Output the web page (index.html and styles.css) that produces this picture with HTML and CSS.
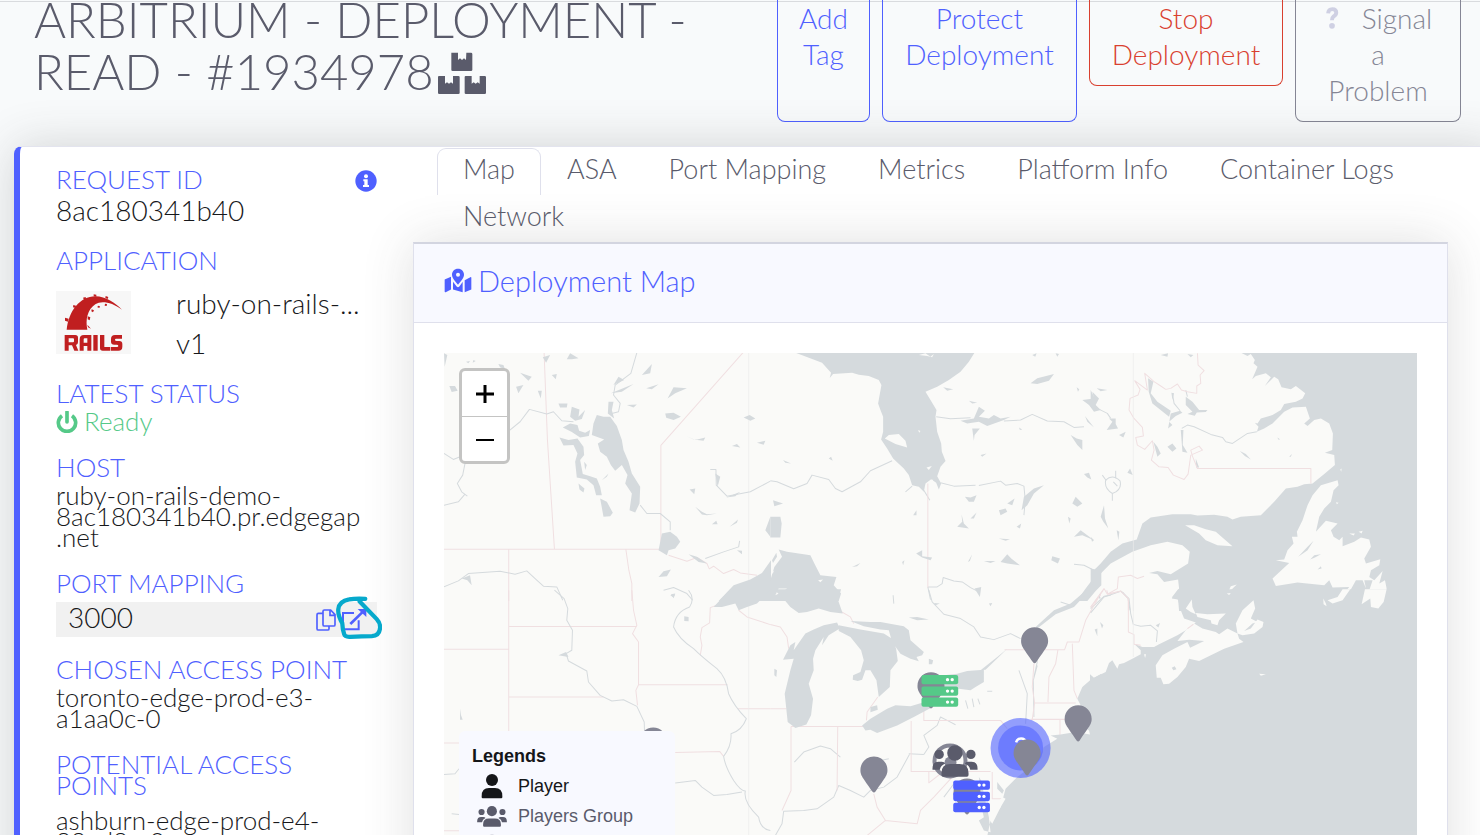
FILE: index.html
```html
<!DOCTYPE html>
<html lang="en">
<head>
<meta charset="utf-8">
<title>Arbitrium - Deployment</title>
<link rel="stylesheet" href="styles.css">
</head>
<body>
<header class="page-head">
  <h1 class="title">ARBITRIUM - DEPLOYMENT -<br>READ - #1934978<svg class="boxes" viewBox="0 0 144 126" aria-hidden="true"><g fill="currentColor"><path d="M40 2h20v22l6-5 6 5 6-5 6 5 1-22h14q4 0 4 4v48q0 3-4 3H44q-4 0-4-3zM0 75q0-3 3-3h18v23l6-4 6 4 6-4 6 4V72h16q4 0 4 3v48q0 3-4 3H4q-4 0-4-3zM80 75q0-3 3-3h18v23l6-4 6 4 6-4 6 4V72h15q4 0 4 3v48q0 3-4 3H84q-4 0-4-3z"/></g></svg>
  </h1>
  <div class="actions">
    <button class="btn primary" type="button">Add<br>Tag</button>
    <button class="btn primary" type="button">Protect<br>Deployment</button>
    <button class="btn danger" type="button">Stop<br>Deployment</button>
    <button class="btn muted" type="button"><span><span class="question"><svg viewBox="0 0 32 62" width="16" height="22" aria-hidden="true"><path d="M5 18Q6 6 17 6q11 0 11 10 0 6-8 11-4 3-4 10" fill="none" stroke="#cfd0e3" stroke-width="11"/><circle cx="16" cy="53" r="8" fill="#cfd0e3"/></svg></span>Signal<br>a<br>Problem</span></button>
  </div>
</header>

<main class="sheet">
  <aside class="details">
    <section class="field tall">
      <div class="field-head"><h2 class="label">REQUEST ID</h2>
        <svg class="info" viewBox="0 0 66 66" aria-hidden="true"><circle cx="33" cy="33" r="32" fill="#4f60ff"/><circle cx="33" cy="19" r="6" fill="#fff"/><path d="M25 28h13v17h4v6H24v-6h4V34h-3z" fill="#fff"/></svg></div>
      <p class="value big">8ac180341b40</p>
    </section>
    <section class="field tall">
      <h2 class="label">APPLICATION</h2>
      <div class="app">
        <svg class="rails" viewBox="0 0 225 189" role="img" aria-label="Rails">
          <rect width="225" height="189" fill="#f7f7f7"/>
          <g fill="#c01f20"><path d="M32 116C38 60 72 16 118 16c32 0 60 20 80 40-30-22-62-28-80-16C94 56 88 86 94 116z"/>
          <path d="M113 10l8 1v6l-8-1zM81 20l8-2 1 7-6 1zM149 15l8 3-2 6-7-3zM52 42l8 2-1 7-8-2zM27 80l11 3-2 9-9-3zM107 55l7 3-3 6-5-3zM126 44l6 2-2 5-6-2zM147 38l6 1-1 6-6-1zM95 76l8 3-2 9-6-3zM94 101l11 12-9-4z"/>
          <path fill-rule="evenodd" d="M26 132h32q8 0 8 8v14q0 6-6 8l7 17H55l-7-16h-10v16H26zM38 142v12h13q3 0 3-3v-6q0-3-3-3zM71 145q0-13 13-13h22v47H94v-14H83v14H71zM83 155h11v-13h-8q-3 0-3 3zM112 132h13v47h-13zM132 132h13v36h18v11h-23q-8 0-8-8zM198 132v11h-18q-3 0-3 3 0 4 5 4h8q9 0 9 9v8q0 12-12 12h-22v-11h18q4 0 4-3 0-4-5-4h-7q-10 0-10-9v-8q0-12 12-12z"/></g>
        </svg>
        <div class="app-name"><p>ruby-on-rails-...</p><p>v1</p></div>
      </div>
    </section>
    <section class="field">
      <h2 class="label">LATEST STATUS</h2>
      <p class="value status"><svg viewBox="0 0 66 66" width="22" height="22" aria-hidden="true"><path d="M18 14a26 26 0 1 0 30 0" fill="none" stroke="currentColor" stroke-width="11"/><path d="M33 3v30" stroke="currentColor" stroke-width="11" stroke-linecap="round"/></svg>Ready</p>
    </section>
    <section class="field">
      <h2 class="label">HOST</h2>
      <p class="value">ruby-on-rails-demo-<br>8ac180341b40.pr.edgegap<br>.net</p>
    </section>
    <section class="field port">
      <h2 class="label">PORT MAPPING</h2>
      <div class="port-box"><span>3000</span>
        <button type="button" class="icon-btn" aria-label="Copy"><svg viewBox="0 0 58 66" width="20" height="22"><path d="M18 13H6q-4 0-4 4v42q0 4 4 4h28q4 0 4-4v-6M24 3h19l13 14v30q0 4-4 4H24q-4 0-4-4V7q0-4 4-4zm17 0v16h15" fill="none" stroke="#4f60ff" stroke-width="5"/></svg></button>
        <a class="icon-btn" href="#" aria-label="Open"><svg viewBox="0 0 78 66" width="26" height="22"><path d="M39 12H6v49h47V34" fill="none" stroke="#4f60ff" stroke-width="6"/><path d="M28 45L66 8" stroke="#4f60ff" stroke-width="8"/><path d="M50 0h26v24z" fill="#4f60ff"/></svg></a>
        <svg class="scribble" viewBox="0 0 140 130" aria-hidden="true"><path d="M89 8Q60 6 40 10 10 15 7 40q-2 18 12 42 1 20 6 34 2 8 18 8 38-2 66-2 24-1 25-26 1-14-10-26L72 16" fill="none" stroke="#06a9cc" stroke-width="13" stroke-linecap="round" stroke-linejoin="round"/></svg>
      </div>
    </section>
    <section class="field">
      <h2 class="label">CHOSEN ACCESS POINT</h2>
      <p class="value">toronto-edge-prod-e3-<br>a1aa0c-0</p>
    </section>
    <section class="field">
      <h2 class="label">POTENTIAL ACCESS<br>POINTS</h2>
      <p class="value after-two">ashburn-edge-prod-e4-<br>88ad8c-0</p>
    </section>
  </aside>

  <div class="content">
    <nav class="tabs">
      <a class="tab active" href="#">Map</a><a class="tab" href="#">ASA</a><a class="tab" href="#">Port Mapping</a><a class="tab" href="#">Metrics</a><a class="tab" href="#">Platform Info</a><a class="tab" href="#">Container Logs</a><a class="tab" href="#">Network</a>
    </nav>
    <section class="panel">
      <h2 class="panel-head"><svg viewBox="0 0 84 74" width="28" height="25" aria-hidden="true"><path d="M42 2C31 2 24 10 24 20c0 10 10 20 18 30 8-10 18-20 18-30C60 10 53 2 42 2zm0 12a6 6 0 1 1 0 12 6 6 0 0 1 0-12zM2 34l19-8v38L5 72q-3 1-3-2zM27 41q7 9 11 14 4 4 8 0 5-6 10-14v31l-29-8zM62 36l17-9q3-1 3 2v35l-20 8z" fill="currentColor" fill-rule="evenodd"/></svg>Deployment Map</h2>
      <div class="panel-body">
        <div class="map">
          <svg class="map-canvas" viewBox="444 353 972 520" preserveAspectRatio="xMidYMin slice" role="img" aria-label="Deployment map">
            <defs>
              <path id="pin" transform="scale(.0703)" fill="#858695" d="M172.3 501.7C27 291 0 269.4 0 192 0 86 86 0 192 0s192 86 192 192c0 77.400-27 99-172.300 309.700-9.500 13.800-29.900 13.800-39.400 0z"/>
              <g id="server"><rect width="110" height="28" rx="6"/><rect y="34" width="110" height="28" rx="6"/><rect y="67" width="110" height="28" rx="6"/><g fill="#fff"><circle cx="78" cy="14" r="5"/><circle cx="92" cy="14" r="5"/><circle cx="78" cy="48" r="5"/><circle cx="92" cy="48" r="5"/><circle cx="78" cy="81" r="5"/><circle cx="92" cy="81" r="5"/></g></g>
              <g id="group"><circle cx="20" cy="32" r="14"/><circle cx="115" cy="32" r="14"/><circle cx="67" cy="28" r="23"/><path d="M0 74q0-20 18-20h10q8 0 10 5-14 6-16 19H0zM135 74q0-20-18-20h-10q-8 0-10 5 14 6 16 19h22zM27 88q0-27 26-27h28q27 0 27 27v6q0 5-5 5H32q-5 0-5-5z"/></g>
            </defs>
            <rect x="0" y="353" width="1600" height="700" fill="#fafaf8"/>

            <g transform="translate(440 350) scale(.33333)">
              <g class="border"><path d="M312 8L322 270 343 597M12 597H662V286L908 8M206 597V752M557 597L566 660 575 700V752M685 615L740 633 770 622 800 640 807 656 820 648 850 670 880 658 900 668 950 675"/><path class="grid" d="M925 8V752"/></g>
              <g class="river"><path d="M590 8L572 70 525 105 520 135 540 160 535 185 515 190M203 245L240 215 268 178 320 192 340 185 365 212 400 215M12 310L40 328 60 320 67 300M75 340L68 375 52 400 65 425 82 438M75 432L55 455 12 465M600 465L620 490 660 490 690 515 690 540M810 358H827L828 405 860 438 930 425 990 393M795 625L850 605 895 590 898 572M12 710L55 692 85 670 180 663 225 672 260 662 290 690 310 708 350 710 368 750M670 720L700 712 740 730 757 750"/></g>
              <g class="water"><path d="M470 195L490 200 510 200 530 228 545 270 550 300 565 335 575 370 600 410 598 460 585 487 568 480 575 430 555 400 562 375 545 345 525 362 512 345 500 320 480 305 473 280 492 268 455 255 460 220z"/>
              <path d="M368 232L390 220 412 225 417 242 435 248 450 240 446 258 420 262 395 246zM358 262L385 270 412 265 430 290 432 315 420 330 428 372 450 378 470 385 480 410 485 435 468 435 460 405 440 388 410 382 405 335 412 310 400 285 370 286zM480 445L500 455 518 488 510 498 490 500zM415 400L433 415 430 427 418 418zM355 160L382 160 380 172 360 172zM395 170L418 178 415 200 435 180 425 207 405 212 390 200zM485 390L505 370 500 380zM432 335L440 345 435 360z"/>
              <path d="M655 600L665 550 690 545 710 560 720 575 705 595 685 600 680 615zM675 190L700 188 722 200 700 210 678 203zM682 145L700 112 740 115 705 130zM560 165L590 163 580 172zM618 115L655 103 635 118zM605 75L635 42 630 70zM520 105L535 80 552 90zM512 130L580 102 545 125zM505 155L520 155 515 180 522 205 503 190zM28 108L45 108 53 122 35 126zM293 122L305 122 302 145zM335 75L350 72 347 88zM228 110L250 105 235 130zM175 42L190 45 195 58 180 52zM240 68L275 80 265 92zM380 28L390 10 415 25 395 28zM308 22L330 15 318 38zM12 10L22 15 14 50zM910 202L928 195 945 205 930 212zM875 288L890 282 900 292zM950 278L975 272 970 284zM738 258L765 270 795 262 790 272 760 268zM748 418L765 415 762 432zM765 470L785 485 800 492 830 490 800 495 785 493zM825 370L840 380 832 410zM858 442L900 425 885 438zM815 522L828 512 832 522zM868 530L893 508 890 518zM655 680L670 663 692 658 680 678zM745 612L770 620 800 640 775 635zM78 35L90 33 85 40zM100 30L107 33 98 38zM890 600L905 602 905 612zM690 735L705 732 700 742zM65 685L90 675 95 705 82 690z"/>
              <path d="M835 752L880 705 930 688 965 668 992 630V752zM975 540L990 500V560z"/></g>
            </g>

            <g transform="translate(770 350) scale(.33333)">
              <g class="river"><path d="M0 392L20 395 70 416 110 400 125 375 175 388 195 415 215 425 270 395 300 362 365 332M497 200L540 206 600 203M700 213L750 210 785 193 830 213 880 215 910 232 940 230M510 398L550 408 615 405M625 406L690 393 705 405 740 400 760 408 764 450 760 495M472 710H500L515 700 518 682 550 692 575 695 600 712 625 725M472 710L480 748M425 408L405 425M460 420L478 450M910 642L940 645 970 660"/></g>
              <path class="border" d="M472 400V712M990 735L975 750"/>
              <g class="water"><path d="M75 8L155 38 182 68 178 84 188 72 245 68 265 74 295 78 325 90 333 105 323 160 330 180 338 200 338 245 332 268 350 295 368 325 400 355 415 375 425 405 445 410 460 425 465 400 482 387 497 398 505 418 512 400 500 378 510 350 525 333 514 305 512 280 500 245 495 200 498 180 480 150 465 125 500 110 535 90 570 65 595 35 612 8z"/>
              <path d="M0 500L30 500 34 520 30 562 0 562zM5 630L18 608 20 620 8 638zM0 690L12 650 35 620 25 598 50 605 120 615 132 640 150 675 198 680 190 705 212 730 205 752H0zM570 212L610 205 625 170 643 182 625 200 655 205 670 195 690 205 720 200 700 210 650 228 625 215 590 220zM605 235L628 235 612 255 610 272zM780 100L800 85 850 72 835 92 800 102zM518 112L548 118 530 122zM595 152L620 158 605 160zM630 315L648 310 635 320zM583 440L600 442 618 435 610 455 595 455zM560 530L575 515 573 492 580 520 595 535zM600 505L618 487 610 505zM685 480L705 475 710 485 690 495zM710 460L732 445 725 465zM738 530L752 520 748 535zM753 480L760 440 790 415 820 405 790 430 770 465zM845 618L868 625 862 640 842 630zM690 635L710 612 722 625 748 645 710 640zM640 632L675 632 660 638zM592 635L605 612 598 632zM685 565L718 567 705 572zM900 255L918 265 935 270 935 300 920 285zM940 372L955 368 962 388 950 382zM905 460L915 440 935 460 920 470zM892 500L900 505 896 520zM910 560L930 540 970 570 935 555zM935 150L970 145 965 125 985 145 975 165 990 180 970 185 955 165zM943 198L970 232 950 215zM437 610L455 600 455 618 485 622 480 630 455 622zM428 495L438 480 438 495zM395 635L402 630 398 645zM175 325L182 320 187 332zM38 330L62 340 45 338zM8 450L38 460 12 468zM85 575L108 540 95 560zM612 715L632 710 628 740zM245 650L270 638 260 648zM918 752L945 715 970 682 968 660 992 645V705L975 722 950 752zM745 232L755 238 748 240zM785 15L798 10 794 20zM855 10L865 12 860 20zM918 112L926 118 922 125z"/></g>
              <g class="land"><path d="M343 265L355 255 385 252 405 272 410 292 375 282zM468 352L484 348 475 360zM445 15L465 10 480 20 490 12 485 22 470 18zM443 240L450 243 446 248zM143 690L158 688 150 696zM0 672L12 660 8 668zM15 735L25 715 50 715 35 725zM482 390L488 388 486 395z"/></g>
            </g>

            <g transform="translate(1090 350) scale(.33333)">
              <path class="water" d="M450 8L470 18 480 12 492 30 488 40 500 50 484 88 495 78 525 70 540 82 522 108 550 80 562 88 572 112 600 118 615 108 643 130 635 145 615 155 580 162 570 180 545 195 510 205 500 220 492 218 503 230 498 245 520 235 545 220 580 185 605 172 645 170 657 205 640 220 650 228 670 210 690 205 715 220 726 250 724 300 702 308 730 315 732 345 700 372 665 400 640 402 620 410 585 415 550 455 510 495 450 500 425 508 410 500 370 494 320 496 300 492 245 492 180 502 155 520 138 568 95 580 60 605 30 640 12 658 0 655V710L20 680 60 640 125 605 180 585 230 575 275 585 297 605 292 640 240 672 200 662 175 668 200 672 220 695 262 688 265 715 243 745 262 748 265 782H1080V8z"/>
              <g class="land"><path d="M740 390L743 405 728 420 720 455 700 475 685 500 675 545 705 512 740 520 720 540 728 560 745 570 755 560 755 588 790 575 810 562 835 568 840 590 820 625 825 640 868 627 865 645 840 660 835 680 850 690 875 662 865 700 882 690 887 715 865 775 845 775 830 755 810 762 835 720 845 690 820 690 825 715 815 690 795 690 770 735 740 758 720 755 725 745 750 740 775 710 725 712 715 690 700 705 620 697 555 707 545 685 595 638 555 630 580 628 590 600 608 580 603 560 620 560 618 545 635 510 650 465 665 435 690 405 725 395zM283 525L310 525 345 537 375 545 425 588 380 585 345 570 325 550zM410 730L420 708 438 703 420 720zM460 782L485 750 493 782zM285 782L300 750 310 782zM748 358L752 355 751 365zM735 456L743 458 738 462zM775 550L792 550 788 556zM803 545L815 542 812 550zM698 742L705 750 705 766z"/></g>
              <g class="water"><path d="M172 85L188 95 180 130 200 155 240 182 235 200 185 160 174 125zM240 190L268 182 275 188 255 198 235 215 245 225 232 235zM285 140L305 155 325 180 350 180 345 186 318 187 312 197 290 192 305 185 285 165zM270 240L278 240 276 285 290 308 275 305zM188 275L200 290 210 310 200 320zM230 290L245 280 257 295 245 305zM315 325L325 352 316 352zM0 120L10 140 12 165 20 172 12 180 0 170zM48 240L65 215 55 205 75 205 75 222 82 235zM85 255L105 245 98 262zM110 368L118 355 126 375zM40 465L43 505 53 535 38 515 30 500zM78 540L86 545 83 570zM18 115L50 120 30 124zM210 15L232 10 230 20zM290 12L308 15 300 22zM242 128L250 130 245 150zM447 303L465 312 480 328 462 318zM560 262L568 268 562 268zM595 320L603 312 600 320zM622 620L650 590 668 572 650 600zM658 628L670 615 690 612 672 622zM680 658L690 648 692 655zM0 560L10 570 4 575z"/></g>
              <g class="river"><path d="M273 235L290 225 310 230 360 253 395 262 405 275 425 280 470 250 498 245M245 130L250 160 268 182M285 120L290 140M20 175L50 190 60 205M45 390Q65 370 88 392 95 420 65 430 40 415 45 390zM65 430V452M75 362V385M35 375L47 392M68 395L80 408M0 775L40 738 60 735M95 725L112 745 118 780"/></g>
              <g class="border"><path d="M320 10L322 45 340 62 328 75 330 100 318 108 318 130 290 125 272 120 260 102 240 115 225 118 210 108 190 95 162 70 170 120 150 105 132 92 148 118 142 135 118 145 115 180 130 205 155 232 158 258 135 262 140 285 162 298 185 272 190 300 182 330 205 350 232 352 248 375 280 388 292 372 300 315 335 300 325 288 300 300 305 318 320 355H660V400M0 770L40 715 50 732 80 715 83 680 120 675 140 685 160 678M50 732L90 722 113 745V780"/><path class="grid" d="M128 8V782"/></g>
            </g>

            <g transform="translate(440 590) scale(.33333)">
              <g class="border"><path d="M206 0V425M12 177H206M206 109H590M206 320H490M12 458H58M12 721H58M575 0L580 60 590 105 577 130 595 155V283H862M595 283L587 300 592 345M990 103L920 80 895 60M862 32L810 52 808 98 785 112 780 140 785 165 780 195M892 355H990M705 486L838 483 850 498"/><path class="grid" d="M925 0V735"/></g>
              <g class="river"><path d="M343 0L372 25 383 55 380 90 397 120 395 180 378 190 385 212 440 242 445 275 480 315 515 332 550 328 590 348 612 395 613 425M745 0Q765 25 748 50 705 65 700 110 715 145 760 175 785 200 830 235 858 260 865 310 880 345 918 385 905 420 872 430 875 465 850 498 855 530 880 570 900 600 915 602 908 635 955 680 960 715 990 720M705 578L765 570 785 590 820 615 860 612 905 605M12 552L45 550 57 535M35 670L57 672"/></g>
              <g class="water"><path d="M820 50L870 -3H993L950 40 920 50 895 60 885 40 845 50zM732 78L745 80 745 93 732 92zM692 12L705 10 700 24zM355 195L378 185 385 200 372 198zM60 355L63 375 68 388 60 388z"/></g>
            </g>

            <g transform="translate(770 590) scale(.33333)">
              <g class="river"><path d="M475 0L485 35 520 72 570 85 610 110 630 140 670 148 720 130 750 145M790 120L800 215 790 260M800 225L788 270 790 380M745 240L770 310 765 400M460 492L475 470 460 435 500 405 510 380 530 390 555 403M418 490L380 560 340 590 300 600 280 620 240 600 205 585 190 620 140 655 100 660 40 662 35 700 15 735M72 515L100 485 150 467 180 475 210 500M330 510L355 505M585 330L592 355M605 325L610 350M622 325L628 342M650 303H665M870 35L900 45 930 25M368 15L370 40M415 490L460 492M550 580L520 620"/></g>
              <g class="border"><path d="M0 103L30 110 50 140 55 175M48 355H0M62 408V600L35 660M62 408H280M202 408L200 600M322 320L290 365 288 390M422 392V543H660M460 350V390H690L710 415M702 178H882L890 155 925 155 945 90 990 10M792 338H915M780 387H920M868 387V435M905 160L910 300 920 325M862 178L855 220 835 260 832 335M790 220L785 290 792 338 785 387M665 545V625H700M475 545V577L510 550 545 560M545 560L490 620 450 660 440 700 345 690 320 650 310 610M345 690L290 735M205 60L240 80 250 100"/></g>
              <g class="water"><path d="M10 -3L35 20 60 50 85 68 110 65 145 55 180 65 217 70 203 30 212 -3z"/><path d="M38 208L60 165 75 155 70 180 105 130 130 118 160 105 200 97 208 115 175 135 155 165 160 140 135 180 128 205 130 240 115 280 128 325 122 375 108 402 75 413 52 395 43 310 60 240 70 205zM205 105L270 118 340 130 365 145 377 175 382 212 360 240 358 290 325 320 318 270 300 240 285 240 275 268 262 272 247 268 248 255 270 245 280 210 272 180 240 140 205 122zM240 92L300 95 330 95 400 108 415 120 420 150 460 185 455 195 438 200 445 213 420 205 390 190 365 155 355 120 330 118 280 108zM300 350L320 345 322 358 300 366zM275 405L300 385 350 355 375 345 420 348 480 330 482 352 430 380 380 405 320 428 300 418 285 420zM520 255L560 250 590 242 640 238 640 275 615 290 600 300 565 295 530 295 500 300zM475 205L488 210 485 222 475 222zM630 240L680 200 710 175 690 195 645 238zM795 110L850 60 900 40 950 -3H960L910 50 855 72 800 115zM415 82L440 80 475 88 440 90zM12 235L20 240 18 260 12 255zM490 38L508 40 495 45zM655 40L665 38 660 48zM985 10L990 25 985 25z"/>
              <path d="M992 250L960 268 935 290 920 325 930 345 912 370 925 400 955 420 958 432 915 425 870 432 840 435 860 445 820 470 800 515 740 560 705 595 690 650 660 690 650 737H992zM680 575L700 600 695 610 680 595zM625 560L632 570 640 610 655 680 660 725 640 720 625 690 640 680 630 640 605 625 630 615z"/></g>
              <path class="land" d="M705 625L690 650 675 680 665 700 655 685 670 650 695 620z"/>
            </g>

            <g transform="translate(1090 590) scale(.33333)">
              <path class="water" d="M262 -3L243 22 262 28 270 60 280 85 315 97 285 120 260 135 205 162 190 170 155 170 130 160 150 180 150 192 125 205 100 218 85 222 80 235 65 210 55 218 45 245 10 262 -2 252V850H1080V-3z"/>
              <g class="land"><path d="M315 68L350 72 405 70 385 90 380 105 362 100 360 90 320 80zM285 55L303 28 305 50 315 72 300 65zM488 30L493 55 480 85 500 95 485 100 460 122 480 115 500 88 518 95 515 110 490 130 455 135 440 130 435 100 455 60zM260 152L285 120 310 100 335 115 375 125 385 132 410 115 440 130 445 145 458 155 400 175 325 212 295 205 285 230 260 260 235 280 218 282 210 262 198 262 195 225 215 195 250 175 290 155 298 172 340 152 295 148zM710 30L740 20 755 -3H778L755 30 725 40zM822 -3H887L878 35 862 55 840 50 838 25 812 42zM505 250L525 252 510 256zM160 192L166 192 163 203zM697 25L705 40 707 48 698 42zM408 10L420 8 415 14z"/></g>
              <path class="water" d="M243 232L252 228 257 237 248 240zM12 118L20 115 20 138zM28 95L38 105 34 115zM195 105L208 98 203 112z"/>
              <path class="river" d="M130 103L150 108 180 105 200 122 197 155M0 68L40 20 90 3 115 25 120 70 128 103"/>
              <path class="border" d="M0 52L38 0M48 0L52 12 90 3 113 25V125L130 133 130 162 150 165M290 115L308 102"/>
              <path class="border grid" d="M128 0V200"/>
            </g>

            <rect x="1100" y="830" width="400" height="100" fill="#d5dadd"/>
            <use href="#pin" transform="translate(639.500 727)"/>
            <use href="#pin" transform="translate(1020.500 627)"/>
            <use href="#pin" transform="translate(1064 705)"/>
            <use href="#pin" transform="translate(860 756)"/>
            <use href="#pin" transform="translate(917 672)"/>
            <use href="#server" fill="#55c988" transform="translate(921 674.700) scale(.33333)"/>
            <circle cx="1020" cy="747.500" r="30" fill="#4f60ff" fill-opacity=".6"/>
            <circle cx="1020" cy="747.500" r="22.500" fill="#4f60ff" fill-opacity=".55"/>
            <path d="M1015.500 742q1-4 5-4t5 4" fill="none" stroke="#fff" stroke-width="2.500"/>
            <use href="#pin" transform="translate(1013 739)"/>
            <circle cx="949.500" cy="760.500" r="15.500" fill="none" stroke="#858695" stroke-width="4"/>
            <circle cx="950" cy="762" r="6" fill="#858695"/>
            <use href="#group" fill="#5a5b6b" transform="translate(932 743.300) scale(.33333)"/>
            <use href="#pin" transform="translate(953 778)"/>
            <use href="#server" fill="#4f60ff" transform="translate(952.700 780) scale(.33333)"/>
          </svg>
          <div class="zoom"><button type="button" aria-label="Zoom in"><svg viewBox="0 0 20 20" width="20" height="20"><path d="M1 10h18M10 1v18" stroke="#000" stroke-width="3"/></svg></button><button type="button" aria-label="Zoom out"><svg viewBox="0 0 20 20" width="20" height="20"><path d="M1 11h18" stroke="#000" stroke-width="2"/></svg></button></div>
          <div class="legend">
            <h3>Legends</h3>
            <ul>
              <li><svg viewBox="0 0 90 78" width="30" height="26"><circle cx="45" cy="21" r="18" fill="#151619"/><path d="M14 69q0-24 22-24h18q22 0 22 24v4q0 3-3 3H17q-3 0-3-3z" fill="#151619"/></svg>Player</li>
              <li class="soft"><svg viewBox="0 0 135 100" width="30" height="22"><use href="#group" fill="#5a5b6b"/></svg>Players Group</li>
              <li class="soft"><svg viewBox="0 0 30 30" width="30" height="26"><circle cx="15" cy="15" r="13" fill="#858695"/></svg>Location</li>
            </ul>
          </div>
        </div>
      </div>
    </section>
  </div>
</main>
</body>
</html>
```

FILE: styles.css
```css
* { box-sizing: border-box; }
body {
  margin: 0;
  height: 100vh;
  overflow: hidden;
  background: #f8fafb;
  color: #5a5b6b;
  font-family: Lato, "Open Sans", sans-serif;
  font-weight: 300;
  font-size: 27px;
}
h1, h2, h3, p, ul { margin: 0; padding: 0; font-weight: 300; }
a { color: inherit; text-decoration: none; }
button { font: inherit; color: inherit; background: none; border: 0; padding: 0; cursor: pointer; }

.page-head {
  display: flex;
  justify-content: space-between;
  align-items: flex-start;
  min-height: 147px;
  padding: 0 19px 0 34px;
  margin-top: 1px;
  border-top: 1px solid #d9dbde;
}
.title { font-size: 49px; line-height: 52px; margin-top: -9px; white-space: nowrap; }
.boxes { width: 48px; height: 42px; margin-left: 4px; vertical-align: -4px; }
.actions { display: grid; grid-template-columns: 93px 195px 194px 166px; gap: 12px; align-items: stretch; font-size: 28px; line-height: 36px; }
.btn {
  display: flex;
  justify-content: center;
  align-items: flex-start;
  text-align: center;
  padding-bottom: 13px;
  margin-top: -2px;
  border: 1px solid;
  border-top: 0;
  border-radius: 0 0 8px 8px;
}
.primary { color: #4f60ff; }
.danger { color: #d9402f; align-self: start; }
.muted { color: #858695; }
.question { margin-right: 22px; }

.sheet {
  position: relative;
  display: flex;
  align-items: flex-start;
  min-height: 760px;
  margin: -2px -20px 0 14px;
  background: #fff;
  border-left: 6px solid #4f60ff;
  border-top: 1px solid #e3e4ee;
  border-radius: 8px;
  box-shadow: 0 0 48px rgba(60, 60, 60, .2);
}
.details { width: 321px; margin: 22px 36px 0; color: #17181b; font-size: 26px; line-height: 21px; flex: none; }
.field { margin-bottom: 25px; }
.field.tall { margin-bottom: 29px; }
.field.port { margin-bottom: 22px; }
.field-head { display: flex; justify-content: space-between; height: 21px; }
.label { color: #4f60ff; font-size: 26px; line-height: 21px; }
.info { width: 22px; height: 22px; margin-top: 1px; }
.value { margin-top: 7px; }
.value.big { font-size: 28px; margin-top: 10px; }
.value.after-two { margin-top: 14px; }
.app { display: flex; gap: 45px; margin-top: 20px; font-size: 28px; }
.app-name { display: flex; flex-direction: column; gap: 19px; padding-top: 2px; }
.rails { width: 75px; height: 63px; }
.status { display: flex; align-items: center; gap: 6px; height: 21px; color: #55c988; }
.port-box {
  position: relative;
  display: flex;
  align-items: center;
  gap: 5px;
  height: 35px;
  margin-top: 8px;
  padding: 0 10px 0 12px;
  background: #f1f1f1;
  font-size: 28px;
}
.port-box span { margin-right: auto; padding-bottom: 4px; }
.icon-btn { display: flex; }
.scribble { position: absolute; right: -5px; top: -6px; width: 46px; height: 43px; }

.content { flex: 1; min-width: 0; margin-right: 52px; }
.tabs { display: flex; flex-wrap: wrap; padding: 1px 0 0 24px; }
.tab { height: 47px; line-height: 40px; padding: 0 25px; border: 1px solid transparent; }
.tab.active { border-color: #dfe0ec; border-bottom: 0; border-radius: 9px 9px 0 0; }
.panel { border: 1px solid #dfe0ec; border-top: 2px solid #d3d5e0; background: #fff; box-shadow: 0 0 48px rgba(60, 60, 60, .16); }
.panel-head {
  display: flex;
  align-items: center;
  gap: 6px;
  height: 79px;
  padding: 0 30px 5px;
  color: #4f60ff;
  background: #f8f9ff;
  border-bottom: 1px solid #dfe0ec;
  font-size: 29px;
}
.panel-body { padding: 30px; }
.map { position: relative; height: 520px; overflow: hidden; }
.map-canvas { display: block; width: 100%; height: 100%; }
.water { fill: #d5dadd; }
.land { fill: #fafaf8; }
.river { fill: none; stroke: #d5dadd; stroke-width: 3; stroke-linejoin: round; }
.border { fill: none; stroke: #f0dfe1; stroke-width: 3; stroke-linejoin: round; }
.grid { stroke: #ececec; stroke-width: 2; }

.zoom { position: absolute; left: 15px; top: 15px; width: 51px; border: 3px solid #c4c4c3; border-radius: 6px; background: #fff; }
.zoom button { display: flex; align-items: center; justify-content: center; width: 100%; height: 45px; }
.zoom button + button { border-top: 1px solid #c4c4c3; }
.legend {
  position: absolute;
  left: 15px;
  top: 378px;
  width: 216px;
  padding: 12px 13px;
  background: #f8f9ff;
  color: #151619;
  border-radius: 6px;
  font-family: "Liberation Sans", Arial, sans-serif;
  font-weight: 400;
  font-size: 18px;
}
.legend h3 { font-size: 18px; font-weight: 700; line-height: 26px; }
.legend ul { list-style: none; padding: 2px 0 0 5px; }
.legend li { display: flex; align-items: center; gap: 11px; height: 30px; }
.soft { color: #5a5b6b; }
```
